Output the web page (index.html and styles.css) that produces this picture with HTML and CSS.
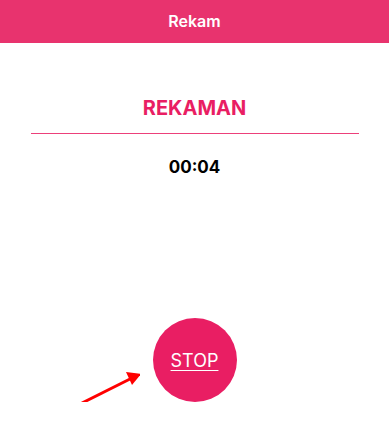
FILE: index.html
```html
<!DOCTYPE html>
<html lang="id">
<head>
    <meta charset="UTF-8">
    <meta name="viewport" content="width=device-width, initial-scale=1.0">
    <title>Rekam</title>
    <link rel="stylesheet" href="styles.css">
</head>
<body>

<header class="app-bar">Rekam</header>

<main class="recorder">
    <h1 class="recorder-title">REKAMAN</h1>
    <div class="recorder-divider"></div>
    <div class="recorder-time">00:04</div>

    <div class="recorder-action">
        <svg class="hint-arrow" width="70" height="40" viewBox="0 0 70 40">
            <line x1="12" y1="37" x2="62" y2="12" stroke="#ff0000" stroke-width="3" stroke-linecap="round"/>
            <polygon points="71,8 56,6 62,19" fill="#ff0000"/>
        </svg>
        <button type="button" class="stop-button">STOP</button>
    </div>
</main>

</body>
</html>
```

FILE: styles.css
```css
body {
    margin: 0;
    font-family: Inter, Roboto, "Liberation Sans", sans-serif;
    background: #fff;
}
.app-bar {
    height: 43px;
    background: #e8336e;
    color: #fff;
    font-size: 16px;
    font-weight: 600;
    display: flex;
    align-items: center;
    justify-content: center;
    padding-bottom: 1px;
    box-sizing: border-box;
}
.recorder {
    display: flex;
    flex-direction: column;
    align-items: center;
}
.recorder-title {
    margin: 53px 0 0;
    color: #e91e63;
    font-size: 20px;
    font-weight: 700;
    line-height: 24px;
}
.recorder-divider {
    width: 328px;
    height: 1px;
    margin-top: 13px;
    background: #ec407a;
}
.recorder-time {
    margin-top: 22px;
    font-size: 17px;
    font-weight: 700;
    color: #000;
    line-height: 22px;
}
.recorder-action {
    position: relative;
    margin-top: 140px;
}
.stop-button {
    width: 84px;
    height: 84px;
    border: none;
    border-radius: 50%;
    background: #e91e63;
    color: #fff;
    font-family: inherit;
    font-size: 18px;
    text-decoration: underline;
    text-underline-offset: 3px;
    padding: 0;
}
.hint-arrow {
    position: absolute;
    left: -83px;
    top: 48px;
}
```
